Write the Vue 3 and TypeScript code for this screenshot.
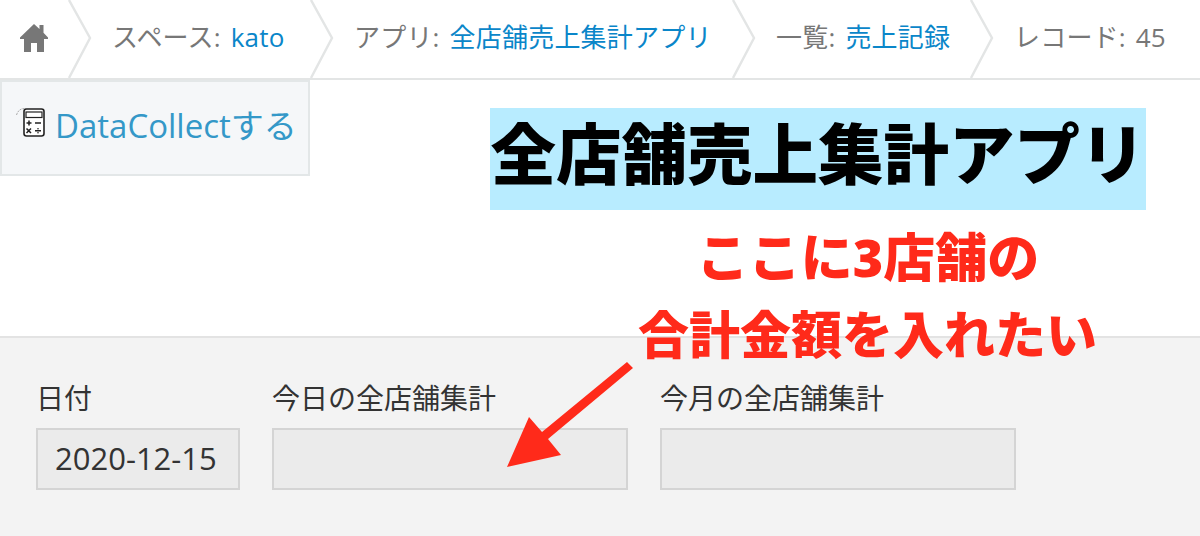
<script setup lang="ts">
type Crumb = { label: string; link?: string; width: number };

const crumbs: Crumb[] = [
  { label: "スペース: ", link: "kato", width: 218 },
  { label: "アプリ: ", link: "全店舗売上集計アプリ", width: 398 },
  { label: "一覧: ", link: "売上記録", width: 214 },
  { label: "レコード: 45", width: 206 },
];

const fields = [
  { label: "日付", value: "2020-12-15", wide: false },
  { label: "今日の全店舗集計", value: "", wide: true },
  { label: "今月の全店舗集計", value: "", wide: true },
];
</script>

<template>
  <div class="page">
    <nav class="crumbs">
      <a class="home">
        <svg width="28" height="28" viewBox="0 0 28 28">
          <path d="M14 0 L19.5 5 V1 H23.5 V8.8 L28 13.5 V15 H24 V28 H17 V19 H11 V28 H4 V15 H0 V13.5 Z" fill="#777" />
        </svg>
      </a>
      <template v-for="c in crumbs" :key="c.label">
        <svg class="sep" width="24" height="78" viewBox="0 0 24 78">
          <path d="M1 0 L22 38 L1 78" fill="none" stroke="#e3e5e5" stroke-width="2.4" />
        </svg>
        <span class="crumb" :style="{ width: c.width + 'px' }">{{ c.label }}<a v-if="c.link">{{ c.link }}</a></span>
      </template>
    </nav>

    <div class="top">
      <button class="collect">
        <svg class="calc" width="30" height="32" viewBox="0 0 30 32">
          <path d="M0.5 9 C2 4 6 1.5 10 3" fill="none" stroke="#aaa" stroke-width="1" stroke-dasharray="2 1" />
          <rect x="8" y="3" width="20" height="27" rx="2.5" fill="#fff" stroke="#222" stroke-width="1.6" />
          <rect x="10" y="6" width="16" height="5.5" fill="#fff" stroke="#222" stroke-width="1.2" />
          <path d="M10.5 17 H15.5 M13 14.5 V19.5 M19 17 H25 M10.5 22.5 L15 27 M15 22.5 L10.5 27 M19 24.8 H25" stroke="#222" stroke-width="1.5" fill="none" />
          <circle cx="22" cy="22.8" r=".8" fill="#222" />
          <circle cx="22" cy="26.8" r=".8" fill="#222" />
        </svg>
        <span>DataCollectする</span>
      </button>
      <div class="head">
        <h1>全店舗売上集計アプリ</h1>
        <p class="note">ここに3店舗の</p>
      </div>
    </div>

    <div class="form">
      <p class="note2">合計金額を入れたい</p>
      <div class="fields">
        <div v-for="f in fields" :key="f.label" class="field" :class="{ wide: f.wide }">
          <label>{{ f.label }}</label>
          <div class="box">{{ f.value }}</div>
        </div>
      </div>
      <svg class="arrow" width="140" height="120" viewBox="500 355 140 120">
        <polygon points="627,362 633,368 548,439 561,455 507,467 529,417 542,432" fill="#ff2a1a" />
      </svg>
    </div>
  </div>
</template>

<style>
html,
body {
  margin: 0;
  background: #fff;
}
</style>

<style scoped>
.page {
  width: 1200px;
  height: 536px;
  overflow: hidden;
  font-family: "Open Sans", "Noto Sans CJK JP", sans-serif;
  display: flex;
  flex-direction: column;
}

.crumbs {
  height: 78px;
  border-bottom: 2px solid #e3e5e5;
  display: flex;
  align-items: center;
  flex-shrink: 0;
}

.home {
  width: 68px;
  height: 78px;
  padding: 24px 0 0 20px;
  box-sizing: border-box;
  flex-shrink: 0;
}

.sep {
  flex-shrink: 0;
}

.crumb {
  box-sizing: border-box;
  flex-shrink: 0;
  padding-left: 20px;
  font-size: 26px;
  letter-spacing: 0.2px;
  word-spacing: 3px;
  color: #777;
  white-space: nowrap;
  position: relative;
  top: -3px;
}

.crumb a {
  color: #0a86c9;
}

.top {
  height: 256px;
  display: flex;
  flex-shrink: 0;
}

.collect {
  width: 310px;
  height: 96px;
  box-sizing: border-box;
  border: 2px solid #e3e7e8;
  background: #f5f7f9;
  padding: 24px 0 0 14px;
  display: flex;
  align-items: flex-start;
  font-family: inherit;
  font-size: 33px;
  color: #3498c8;
}

.calc {
  margin-right: 9px;
  flex-shrink: 0;
}

.collect span {
  line-height: 40px;
  white-space: nowrap;
}

.head {
  margin-left: 180px;
  padding-top: 28px;
  width: 656px;
}

h1 {
  margin: 0;
  height: 102px;
  background: #b8ecff;
  color: #000;
  font-size: 65.5px;
  font-weight: 900;
  line-height: 92px;
  text-align: center;
  white-space: nowrap;
}

.note {
  margin: 21px 0 0;
  padding-left: 100px;
  color: #ff2a1a;
  font-size: 52px;
  font-weight: 900;
  line-height: 52px;
  text-align: center;
  white-space: nowrap;
}

.form {
  flex: 1;
  background: #f3f3f3;
  border-top: 2px solid #e3e3e3;
  position: relative;
  padding-left: 36px;
}

.note2 {
  position: absolute;
  left: 638px;
  top: -36px;
  margin: 0;
  color: #ff2a1a;
  font-size: 51px;
  font-weight: 900;
  line-height: 64px;
  white-space: nowrap;
}

.fields {
  display: flex;
  gap: 32px;
  padding-top: 42px;
}

.field {
  width: 204px;
}

.field.wide {
  width: 356px;
}

label {
  display: block;
  font-size: 28px;
  line-height: 36px;
  color: #333;
  margin-bottom: 12px;
  white-space: nowrap;
}

.box {
  height: 62px;
  box-sizing: border-box;
  border: 2px solid #d4d4d4;
  background: #ebebeb;
  padding-left: 17px;
  font-size: 31px;
  line-height: 56px;
  color: #333;
}

.arrow {
  position: absolute;
  left: 500px;
  top: 17px;
}
</style>
